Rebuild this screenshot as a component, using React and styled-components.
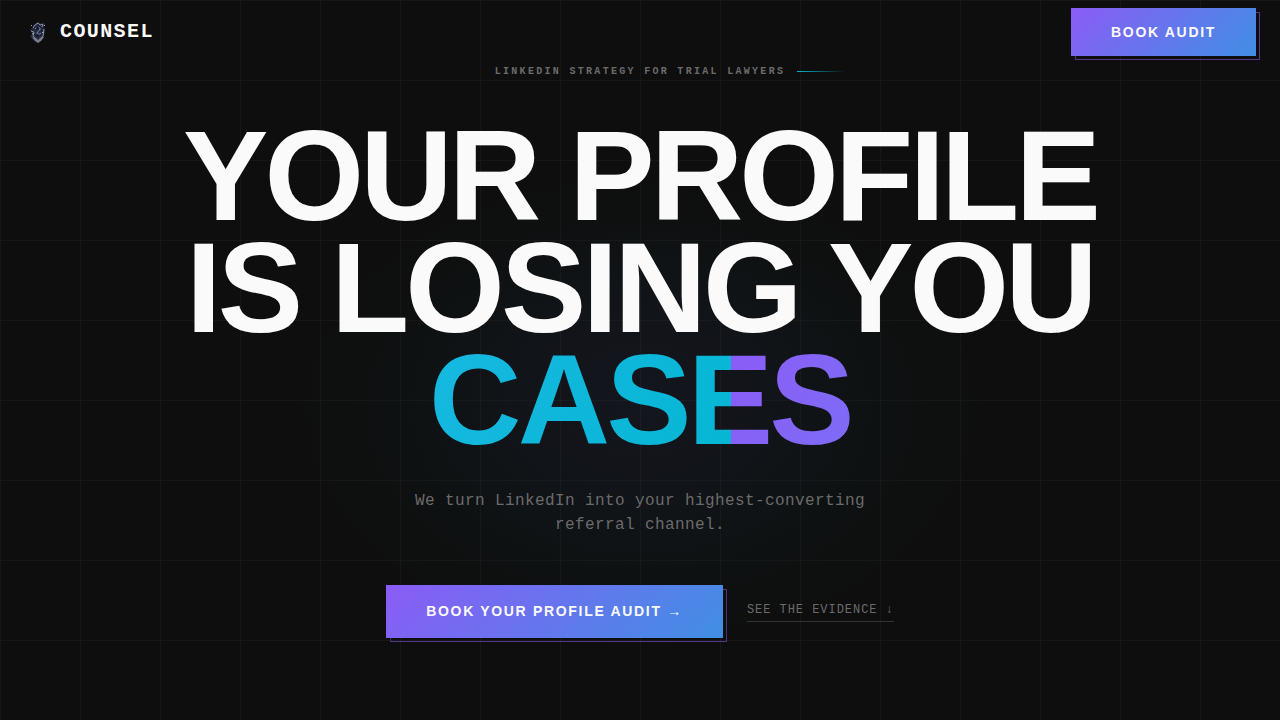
import React from "react";
import styled, { createGlobalStyle } from "styled-components";

const GlobalStyle = createGlobalStyle`
  *, *::before, *::after { box-sizing: border-box; }
  body { margin: 0; background: #0e0e0e; color: #fafafa; font-family: "Liberation Sans", Arial, sans-serif; }
  h1, p { margin: 0; }
`;

const Page = styled.div`
  min-height: 100vh;
  overflow: hidden;
  background:
    linear-gradient(rgba(255, 255, 255, 0.03) 1px, transparent 1px) 0 0 / 80px 80px,
    linear-gradient(90deg, rgba(255, 255, 255, 0.03) 1px, transparent 1px) 0 0 / 80px 80px,
    radial-gradient(ellipse 240px 180px at 50% 400px, rgba(139, 92, 246, 0.05), transparent),
    radial-gradient(ellipse 350px 240px at 50% 410px, rgba(6, 182, 212, 0.025), rgba(6, 182, 212, 0.025) 60%, transparent),
    #0e0e0e;
`;

const Nav = styled.header`
  display: flex;
  align-items: center;
  justify-content: space-between;
  padding: 8px 24px 0 28px;
`;

const Brand = styled.a`
  display: flex;
  align-items: center;
  gap: 12px;
  color: #fafafa;
  text-decoration: none;
  font: bold 20px/24px "Liberation Mono", monospace;
  letter-spacing: 0.07em;
`;

const Crest = styled.svg`
  width: 20px;
  height: 24px;
`;

const Button = styled.button`
  position: relative;
  padding: ${(p) => (p.$large ? "18px 40px 19px" : "16px 40px")};
  border: 0;
  background: linear-gradient(135deg, #8b5cf6, #408fe4);
  color: #fafafa;
  font: bold 14px/16px "Liberation Sans", Arial, sans-serif;
  letter-spacing: 0.12em;
  text-transform: uppercase;
  white-space: nowrap;

  &::after {
    content: "";
    position: absolute;
    inset: 4px -4px -4px 4px;
    border: 1px solid rgba(139, 92, 246, 0.55);
    clip-path: polygon(100% 0, 100% 100%, 0 100%, 0 calc(100% - 4px), calc(100% - 4px) calc(100% - 4px), calc(100% - 4px) 0);
  }
`;

const Hero = styled.main`
  display: flex;
  flex-direction: column;
  align-items: center;
  padding: 6px 24px 80px;
`;

const Eyebrow = styled.div`
  display: grid;
  grid-template-columns: 1fr auto 1fr;
  align-items: center;
  column-gap: 12px;
  width: 100%;
`;

const EyebrowText = styled.p`
  grid-column: 2;
  padding-top: 2px;
  color: #6b6b6b;
  font: bold 10px/16px "Liberation Mono", monospace;
  letter-spacing: 0.23em;
  text-transform: uppercase;
`;

const Rule = styled.span`
  width: 48px;
  height: 1px;
  background: linear-gradient(90deg, #06b6d4, transparent);
`;

const Title = styled.h1`
  margin-top: 40px;
  font-size: 128px;
  line-height: 112px;
  font-weight: bold;
  letter-spacing: -0.03em;
  text-align: center;
  text-transform: uppercase;
`;

const Line = styled.span`
  display: block;
`;

const Accent = styled.span`
  display: inline-block;
  background: linear-gradient(120deg, #8b5cf6, #38bdf8, #06b6d4) 302px 0 / 500% 100%;
  background-clip: text;
  -webkit-background-clip: text;
  color: transparent;
`;

const Lead = styled.p`
  max-width: 480px;
  margin-top: 33px;
  color: #6b6b6b;
  font: 16px/24px "Liberation Mono", monospace;
  letter-spacing: 0.025em;
  text-align: center;
`;

const Actions = styled.div`
  display: flex;
  align-items: center;
  gap: 24px;
  margin-top: 48px;
`;

const TextLink = styled.a`
  padding-bottom: 2px;
  border-bottom: 1px solid #333;
  color: #6b6b6b;
  font: 12px/18px "Liberation Mono", monospace;
  letter-spacing: 0.08em;
  text-decoration: none;
  text-transform: uppercase;
`;

function CrestMark() {
  return (
    <Crest viewBox="0 0 20 24" aria-hidden="true">
      <path d="M4 8 6 4l4-2 4 2 3-1-1 4 1 4-1 7-6 5-6-4-2-3 2-2-2-4z" fill="#25283a" />
      <path d="M5 8 7 5l3-2 2 2 3-1-1 3M3 11l3 1-1 4 3 3M16 9l-1 7-3 4" fill="none" stroke="#858ca6" strokeWidth="1" />
      <path d="M7 9c2-3 5-2 5 0s-3 2-3 4 3 1 4 0" fill="none" stroke="#7f94c8" strokeWidth="1" />
      <path d="M4 17l4 1 2 2 3-3 3 0-3 4-3 2-3-2z" fill="#777b8c" />
      <path d="M8 8l2-2 1 2-2 2zM8 14l3 1-2 2z" fill="#10121c" />
      <path d="M3 6l1-1M16 6l1-1M4 14l2-1M14 12l1 1" stroke="#a6a9b8" strokeWidth="1" />
    </Crest>
  );
}

export default function App() {
  return (
    <Page>
      <GlobalStyle />
      <Nav>
        <Brand href="#top">
          <CrestMark />
          COUNSEL
        </Brand>
        <Button type="button">Book Audit</Button>
      </Nav>
      <Hero>
        <Eyebrow>
          <EyebrowText>LinkedIn strategy for trial lawyers</EyebrowText>
          <Rule />
        </Eyebrow>
        <Title>
          <Line>Your profile</Line>
          <Line>is losing you</Line>
          <Line>
            <Accent>Cases</Accent>
          </Line>
        </Title>
        <Lead>We turn LinkedIn into your highest-converting referral channel.</Lead>
        <Actions>
          <Button type="button" $large>
            Book your profile audit →
          </Button>
          <TextLink href="#evidence">See the evidence ↓</TextLink>
        </Actions>
      </Hero>
    </Page>
  );
}
